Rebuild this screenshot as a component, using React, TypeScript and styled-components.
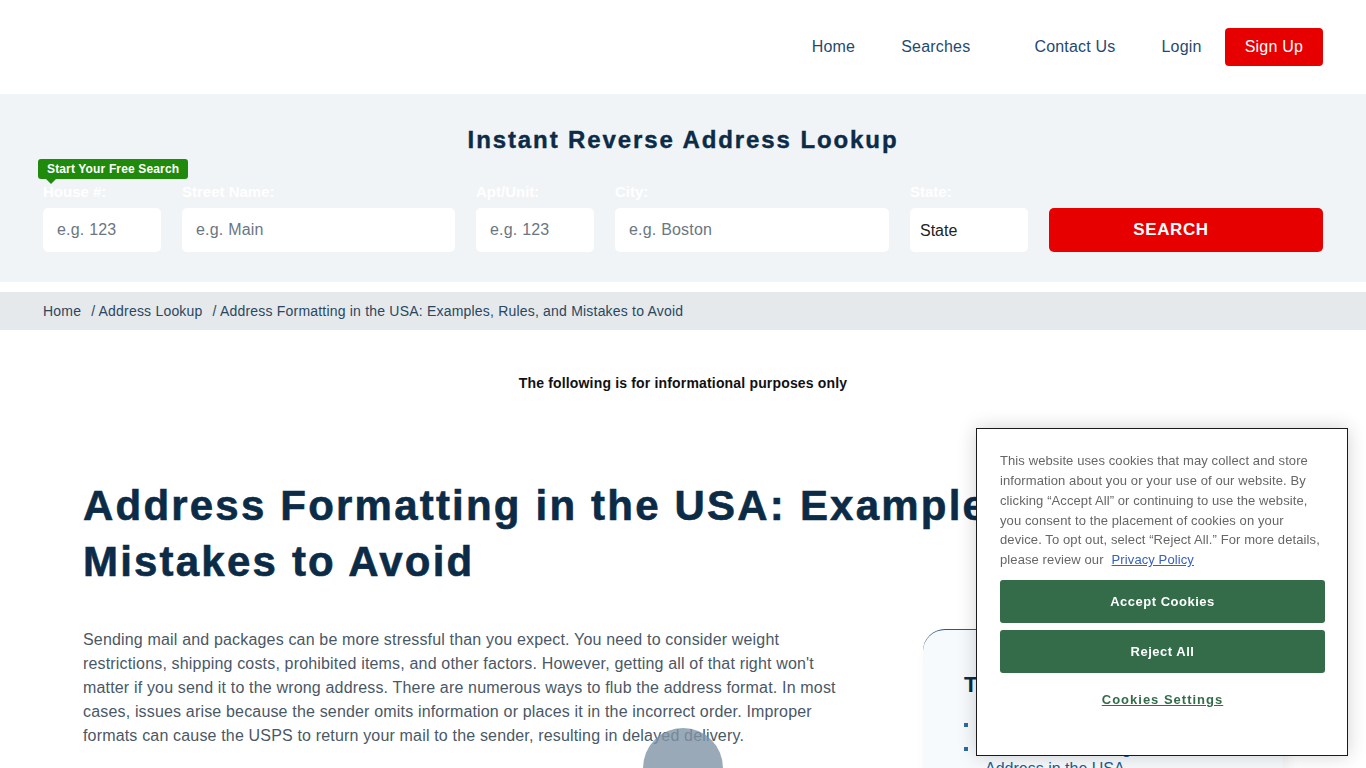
import styled, { createGlobalStyle } from 'styled-components'

const GlobalStyle = createGlobalStyle`
  * { box-sizing: border-box; }
  body {
    margin: 0;
    font-family: "Liberation Sans", Arial, sans-serif;
    background: #fff;
    color: #222;
  }
`

const Header = styled.header`
  height: 94px;
  display: flex;
  align-items: center;
  justify-content: flex-end;
  padding: 0 43px;
  background: #fff;
`

const NavLink = styled.a<{ caret?: boolean }>`
  font-size: 16px;
  letter-spacing: 0.2px;
  color: #1f4a70;
  text-decoration: none;
  padding: 0 ${({ caret }) => (caret ? '41px' : '23px')} 0 23px;
  cursor: pointer;
`

const SignUp = styled.a`
  height: 38px;
  display: flex;
  align-items: center;
  padding: 0 20px;
  background: #e60000;
  color: #fff;
  font-size: 16px;
  letter-spacing: 0.2px;
  border-radius: 4px;
  text-decoration: none;
`

const SearchSection = styled.section`
  background: #f1f4f6;
  padding: 31px 43px 30px;
`

const SearchTitle = styled.h1`
  margin: 0 0 28px;
  text-align: center;
  font-size: 24px;
  line-height: 30px;
  letter-spacing: 1.9px;
  font-weight: 700;
  color: #0b2b47;
  -webkit-text-stroke: 0.4px #0b2b47;
`

const FormRow = styled.div`
  display: grid;
  grid-template-columns: 118px 273px 118px 274px 118px 1fr;
  column-gap: 21px;
  align-items: end;
`

const Field = styled.div`
  position: relative;
  display: flex;
  flex-direction: column;
`

const Label = styled.label`
  color: #fff;
  font-size: 15px;
  font-weight: 700;
  line-height: 18px;
  margin-bottom: 7px;
`

const Input = styled.input`
  height: 44px;
  border: none;
  border-radius: 5px;
  background: #fff;
  padding: 0 14px;
  font-family: inherit;
  font-size: 16px;
  letter-spacing: 0.2px;
  color: #222;
  outline: none;

  &::placeholder {
    color: #6b7682;
  }
`

const Select = styled.select`
  height: 44px;
  border: none;
  border-radius: 5px;
  background: #fff;
  padding: 0 10px;
  font-family: inherit;
  font-size: 16px;
  color: #222;
  appearance: none;
  outline: none;
`

const SearchButton = styled.button`
  height: 44px;
  border: none;
  border-radius: 5px;
  background: #e60000;
  color: #fff;
  font-family: inherit;
  font-size: 17px;
  font-weight: 700;
  letter-spacing: 0.6px;
  padding: 0 30px 0 0;
  cursor: pointer;
`

const Badge = styled.div`
  position: absolute;
  left: -5px;
  top: -24px;
  height: 20px;
  padding: 0 9px;
  display: flex;
  align-items: center;
  background: #1f8a0b;
  color: #fff;
  font-size: 12px;
  letter-spacing: 0.15px;
  font-weight: 700;
  border-radius: 3px;
  white-space: nowrap;

  &::after {
    content: '';
    position: absolute;
    left: 8px;
    bottom: -5px;
    border-left: 5px solid transparent;
    border-right: 5px solid transparent;
    border-top: 5px solid #1f8a0b;
  }
`

const Breadcrumbs = styled.nav`
  margin-top: 10px;
  height: 38px;
  background: #e5e9ec;
  display: flex;
  align-items: center;
  padding: 0 43px;
  font-size: 14px;
  letter-spacing: 0.2px;
  color: #2a475f;
`

const Crumb = styled.span`
  margin-right: 10px;
`

const Notice = styled.p`
  margin: 45px 0 0;
  text-align: center;
  font-size: 14px;
  letter-spacing: 0.17px;
  font-weight: 700;
  color: #111;
`

const Main = styled.main`
  max-width: 1200px;
  margin: 0 auto;
  padding-top: 87px;
`

const ArticleTitle = styled.h2`
  margin: 0 0 38px;
  font-size: 42px;
  line-height: 56px;
  letter-spacing: 2.2px;
  font-weight: 700;
  color: #0b2b47;
  -webkit-text-stroke: 0.6px #0b2b47;
`

const Columns = styled.div`
  display: grid;
  grid-template-columns: 1fr 360px;
  column-gap: 80px;
  align-items: start;
`

const Paragraph = styled.p`
  margin: 0;
  font-size: 16px;
  line-height: 24px;
  letter-spacing: 0.17px;
  color: #4a5866;
`

const TocCard = styled.aside`
  margin-top: 1px;
  background: #f7fafc;
  border-top: 1px solid #2a5a84;
  border-top-left-radius: 22px;
  box-shadow: 4px 6px 14px rgba(0, 0, 0, 0.06);
  padding: 42px 20px 20px 41px;
  min-height: 200px;
`

const TocTitle = styled.h3`
  margin: 0 0 17px;
  font-size: 22px;
  font-weight: 700;
  color: #0b2b47;
`

const TocList = styled.ul`
  margin: 0;
  padding: 0;
  list-style: none;
`

const TocItem = styled.li`
  position: relative;
  padding-left: 21px;
  font-size: 16px;
  line-height: 20px;
  margin-bottom: 4px;

  &::before {
    content: '';
    position: absolute;
    left: 0;
    top: 8px;
    width: 4px;
    height: 4px;
    background: #2a6aa0;
  }

  a {
    color: #1f5c92;
    text-decoration: underline;
  }
`

const ScrollBlob = styled.div`
  position: fixed;
  left: 643px;
  bottom: -40px;
  width: 80px;
  height: 80px;
  border-radius: 50%;
  background: #7f93a6;
  opacity: 0.8;
`

const CookieBanner = styled.div`
  position: fixed;
  right: 18px;
  bottom: 12px;
  width: 372px;
  background: #fff;
  border: 1px solid #1a1a1a;
  box-shadow: 0 0 18px rgba(0, 0, 0, 0.18);
  padding: 22px 22px 48px 23px;
  display: flex;
  flex-direction: column;
`

const CookieText = styled.p`
  margin: 0 0 10px;
  font-size: 13px;
  line-height: 19.8px;
  letter-spacing: 0.1px;
  color: #666;

  a {
    color: #3860be;
    margin-left: 8px;
    text-decoration: underline;
  }
`

const CookieButton = styled.button`
  height: 43px;
  border: none;
  border-radius: 3px;
  background: #346c4a;
  color: #fff;
  font-family: inherit;
  font-size: 13px;
  font-weight: 700;
  letter-spacing: 0.5px;
  margin-bottom: 7px;
  cursor: pointer;
`

const SettingsLink = styled.a`
  margin-top: 12px;
  text-align: center;
  font-size: 13px;
  font-weight: 700;
  letter-spacing: 1px;
  color: #346c4a;
  text-decoration: underline;
`

export default function App() {
  return (
    <>
      <GlobalStyle />
      <Header>
        <NavLink>Home</NavLink>
        <NavLink caret>Searches</NavLink>
        <NavLink>Contact Us</NavLink>
        <NavLink>Login</NavLink>
        <SignUp>Sign Up</SignUp>
      </Header>

      <SearchSection>
        <SearchTitle>Instant Reverse Address Lookup</SearchTitle>
        <FormRow>
          <Field>
            <Badge>Start Your Free Search</Badge>
            <Label>House #:</Label>
            <Input placeholder="e.g. 123" />
          </Field>
          <Field>
            <Label>Street Name:</Label>
            <Input placeholder="e.g. Main" />
          </Field>
          <Field>
            <Label>Apt/Unit:</Label>
            <Input placeholder="e.g. 123" />
          </Field>
          <Field>
            <Label>City:</Label>
            <Input placeholder="e.g. Boston" />
          </Field>
          <Field>
            <Label>State:</Label>
            <Select defaultValue="">
              <option value="">State</option>
            </Select>
          </Field>
          <SearchButton>SEARCH</SearchButton>
        </FormRow>
      </SearchSection>

      <Breadcrumbs>
        <Crumb>Home</Crumb>
        <Crumb>/ Address Lookup</Crumb>
        <Crumb>/ Address Formatting in the USA: Examples, Rules, and Mistakes to Avoid</Crumb>
      </Breadcrumbs>

      <Notice>The following is for informational purposes only</Notice>

      <Main>
        <ArticleTitle>Address Formatting in the USA: Examples, Rules, and Mistakes to Avoid</ArticleTitle>
        <Columns>
          <Paragraph>
            Sending mail and packages can be more stressful than you expect. You need to consider weight
            restrictions, shipping costs, prohibited items, and other factors. However, getting all of that right
            won't matter if you send it to the wrong address. There are numerous ways to flub the address format.
            In most cases, issues arise because the sender omits information or places it in the incorrect order.
            Improper formats can cause the USPS to return your mail to the sender, resulting in delayed delivery.
          </Paragraph>
          <TocCard>
            <TocTitle>Table of Contents</TocTitle>
            <TocList>
              <TocItem><a>Why Address Formatting Matters</a></TocItem>
              <TocItem><a>Standard Formatting Rules for an Address in the USA</a></TocItem>
              <TocItem><a>Examples of Correct Addresses</a></TocItem>
              <TocItem><a>Common Mistakes to Avoid</a></TocItem>
            </TocList>
          </TocCard>
        </Columns>
      </Main>

      <ScrollBlob />

      <CookieBanner>
        <CookieText>
          This website uses cookies that may collect and store information about you or your use of our website.
          By clicking “Accept All” or continuing to use the website, you consent to the placement of cookies on
          your device. To opt out, select “Reject All.” For more details, please review our
          <a>Privacy Policy</a>
        </CookieText>
        <CookieButton>Accept Cookies</CookieButton>
        <CookieButton>Reject All</CookieButton>
        <SettingsLink>Cookies Settings</SettingsLink>
      </CookieBanner>
    </>
  )
}
